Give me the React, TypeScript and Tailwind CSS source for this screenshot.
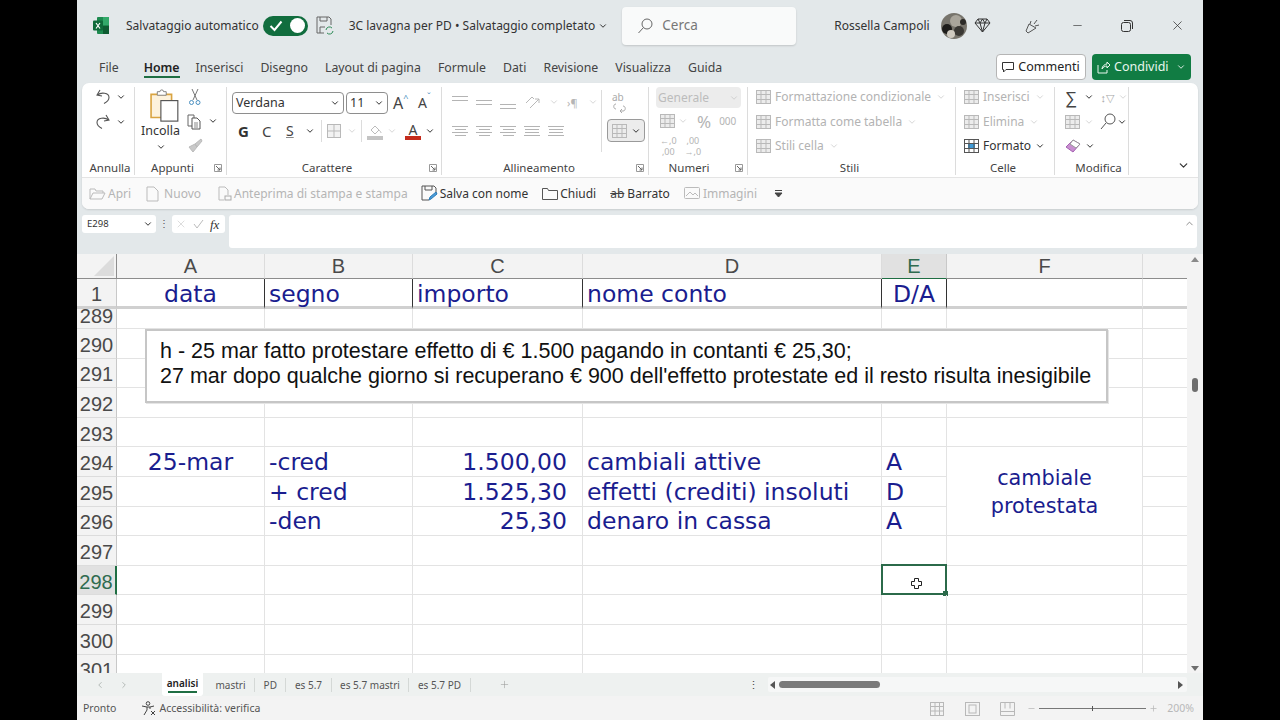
import type { ReactNode } from "react";
import { ChevronDown, ChevronLeft, ChevronRight, ChevronUp, Minus, Plus, X } from "lucide-react";

const tabs = ["Inserisci", "Disegno", "Layout di pagina", "Formule", "Dati", "Revisione", "Visualizza", "Guida"];
const sheets = ["mastri", "PD", "es 5.7", "es 5.7 mastri", "es 5.7 PD"];
const columns = ["A", "B", "C", "D", "E", "F"];

const records: Record<number, string[]> = {
  294: ["25-mar", "-cred", "1.500,00", "cambiali attive", "A"],
  295: ["", "+ cred", "1.525,30", "effetti (crediti) insoluti", "D"],
  296: ["", "-den", "25,30", "denaro in cassa", "A"],
};
const rowNumbers = [289, 290, 291, 292, 293, 294, 295, 296, 297, 298, 299, 300, 301];

function Chev({ off, className = "" }: { off?: boolean; className?: string }) {
  return (
    <ChevronDown
      size={10}
      strokeWidth={off ? 1.5 : 2.4}
      className={`shrink-0 ${off ? "text-[#bdbdbd]" : "text-[#333]"} ${className}`}
    />
  );
}

function Icon({ w = 16, h = 16, children, className = "" }: { w?: number; h?: number; children: ReactNode; className?: string }) {
  return (
    <svg width={w} height={h} viewBox={`0 0 ${w} ${h}`} fill="none" className={`shrink-0 ${className}`}>
      {children}
    </svg>
  );
}

function Launcher() {
  return (
    <Icon w={8} h={8}>
      <path d="M.5 7.5V.5h7v7z" stroke="#999" />
      <path d="M2 2l4 4M6 3.5V6H3.5" stroke="#666" />
    </Icon>
  );
}

function Lines({ widths, gap = 3, color = "#b4b4b4" }: { widths: number[]; gap?: number; color?: string }) {
  return (
    <span className="flex w-[16px] flex-col items-center" style={{ gap }}>
      {widths.map((w, i) => (
        <span key={i} className="h-px" style={{ width: w, background: color }} />
      ))}
    </span>
  );
}

function Group({
  width,
  label,
  launcher,
  labelClass = "",
  children,
}: {
  width: string;
  label: string;
  launcher?: boolean;
  labelClass?: string;
  children: ReactNode;
}) {
  return (
    <div className={`${width} flex h-[88px] shrink-0 flex-col border-r border-[#dcdcdc]`}>
      <div className="h-[72px] min-h-0">{children}</div>
      <div className="flex h-[16px] items-center justify-center pt-[2px]">
        <span className={`flex-1 text-center text-[11.5px] leading-none text-[#444] ${labelClass}`}>{label}</span>
        {launcher && (
          <span className="mr-[4px] flex">
            <Launcher />
          </span>
        )}
      </div>
    </div>
  );
}

function GridIcon({ accent, off }: { accent?: boolean; off?: boolean }) {
  const c = off ? "#b9b9b9" : "#555";
  return (
    <Icon w={15} h={16}>
      <rect x=".5" y="1.5" width="14" height="13" stroke={c} fill={off ? "#ececec" : "#fff"} />
      {accent && <rect x="4" y="6" width="7" height="5" fill="#3f9bd8" />}
      <path d="M.5 5.5h14M.5 10.5h14M5 1.5v13M10 1.5v13" stroke={c} />
    </Icon>
  );
}

function StyleRow({ text }: { text: string }) {
  return (
    <div className="flex h-[24.5px] items-center gap-[4px] pl-[8px]">
      <GridIcon off />
      <span className="text-[12px] leading-none text-[#b3b3b3]">{text}</span>
      <Chev off className="ml-[1px]" />
    </div>
  );
}

function Ribbon() {
  return (
    <div className="mx-[5px] h-[126px] rounded-[7px] bg-white shadow-[0_1px_2px_rgba(0,0,0,0.12)]">
      <div className="flex h-[95px] items-start border-b border-[#e4e4e4] pt-[4px]">
        {/* annulla */}
        <Group width="w-[53px]" label="Annulla" labelClass="pl-[4px]">
          <div className="-mt-[3px] flex h-[25px] items-center gap-[5px] pl-[13px]">
            <Icon w={16} h={16}>
              <path d="M5 1L2 6l5 1M2.5 6C6 3 14 3.500 14 8.500c0 3-3 5-5 6" stroke="#555" strokeWidth="1.1" />
            </Icon>
            <Chev />
          </div>
          <div className="flex h-[25px] items-center gap-[5px] pl-[13px]">
            <Icon w={16} h={16}>
              <path d="M11 1l3 5-5 1M13.500 6C10 3 2 3.500 2 8.500c0 3 3 5 5 6" stroke="#555" strokeWidth="1.1" />
            </Icon>
            <Chev />
          </div>
        </Group>

        {/* appunti */}
        <Group width="w-[92px]" label="Appunti" launcher labelClass="pr-[4px]">
          <div className="flex">
            <div className="flex w-[51px] flex-col items-center">
              <svg width="30" height="33" viewBox="0 0 33 37" fill="none" className="ml-[6px] mt-[2px]">
                <path d="M2 6h23v26H2z" fill="#fdf2dc" stroke="#d9a441" strokeWidth="1.8" />
                <path d="M9 6V3h3a2 2 0 0 1 4 0h3v4H9z" fill="#fff" stroke="#777" />
                <rect x="13" y="13" width="19" height="23" fill="#fff" stroke="#555" strokeWidth="1.3" />
              </svg>
              <span className="text-[12.5px] leading-[18px] text-[#333]">Incolla</span>
              <Chev className="mt-[2px]" />
            </div>
            <div className="-mt-[2px] flex flex-col">
              <div className="flex h-[24px] items-center pl-[1px]">
                <Icon w={16} h={18}>
                  <path d="M5 1l5 11M11 1L6 12" stroke="#777" />
                  <circle cx="4.5" cy="14.5" r="2" stroke="#4a8fc0" />
                  <circle cx="11" cy="14.5" r="2" stroke="#4a8fc0" />
                </Icon>
              </div>
              <div className="flex h-[24px] items-center gap-[6px] pl-[1px]">
                <Icon w={15} h={17}>
                  <path d="M1 2h6v11H1z" stroke="#666" fill="#fff" />
                  <path d="M5 5h5l3 3v8H5z" stroke="#555" fill="#fff" />
                  <path d="M7 10h4M7 12h4M7 14h4" stroke="#888" />
                </Icon>
                <Chev />
              </div>
              <div className="flex h-[24px] items-center pl-[1px]">
                <Icon w={16} h={15}>
                  <path d="M14 1L8 6l2 3 5-6zM8 6L2 9l4 5 4-5z" fill="#c9c9c9" stroke="#bbb" />
                </Icon>
              </div>
            </div>
          </div>
        </Group>

        {/* carattere */}
        <Group width="w-[215px]" label="Carattere" launcher labelClass="pr-[2px]">
          <div className="flex items-center pl-[5px] pt-[5px]">
            <div className="flex h-[22px] w-[112px] items-center justify-between rounded-[4px] border border-[#8e8e8e] px-[3px]">
              <span className="text-[12.5px] leading-none text-[#333]">Verdana</span>
              <Chev />
            </div>
            <div className="ml-[2px] flex h-[22px] w-[42px] items-center justify-between rounded-[4px] border border-[#8e8e8e] px-[3px]">
              <span className="text-[12.5px] leading-none text-[#333]">11</span>
              <Chev />
            </div>
            <span className="ml-[5px] flex w-[25px] text-[16px] leading-none text-[#444]">
              A<sup className="mt-[2px] text-[9px] leading-none text-[#4a8fc0]">^</sup>
            </span>
            <span className="flex w-[20px] text-[14px] leading-none text-[#444]">
              A<sup className="text-[9px] leading-none text-[#4a8fc0]">ˇ</sup>
            </span>
          </div>
          <div className="mt-[5px] flex h-[24px] items-center pl-[11px]">
            <span className="w-[24px] text-[15px] font-bold leading-none text-[#333]">G</span>
            <span className="w-[24px] text-[15px] leading-none text-[#444]">C</span>
            <span className="w-[16px] text-[14px] leading-none text-[#444] underline decoration-[#888]">S</span>
            <Chev className="ml-[3px]" />
            <span className="ml-[6px] h-[22px] w-px bg-[#dcdcdc]" />
            <span className="ml-[4px] flex w-[19px]">
              <Icon w={16} h={16}>
                <rect x="1.500" y="1.500" width="13" height="13" stroke="#b9b9b9" fill="#f2f2f2" />
                <path d="M8 1.500v13M1.500 8h13" stroke="#b9b9b9" />
              </Icon>
            </span>
            <Chev off className="ml-[2px]" />
            <span className="ml-[4px] h-[22px] w-px bg-[#dcdcdc]" />
            <span className="ml-[5px] flex h-[18px] w-[16px] flex-col items-center justify-end">
              <Icon w={14} h={11}>
                <path d="M3 6l4-4 4 4-4 4z" stroke="#bbb" />
                <path d="M11 6c1 1 2 2 2 3" stroke="#bbb" />
              </Icon>
              <span className="mt-[1px] h-[4px] w-[16px] bg-[#c4c4c4]" />
            </span>
            <Chev off className="ml-[4px]" />
            <span className="ml-[7px] flex w-[18px] flex-col items-center">
              <span className="text-[14px] leading-[13px] text-[#444]">A</span>
              <span className="h-[4px] w-[16px] bg-[#c42b1c]" />
            </span>
            <Chev className="ml-[3px]" />
          </div>
        </Group>

        {/* allineamento */}
        <Group width="w-[207px]" label="Allineamento" launcher>
          <div className="flex h-full">
            <div className="w-[159px] pl-[10px]">
              <div className="flex h-[30px] items-center gap-[8px]">
                <span className="mb-[8px] flex">
                  <Lines widths={[16, 16]} />
                </span>
                <Lines widths={[16, 16]} />
                <span className="mt-[8px] flex">
                  <Lines widths={[16, 16]} />
                </span>
                <Icon w={17} h={16}>
                  <path d="M2 9l6-6 2 2M6 14l9-9M15 5v4M15 5h-4" stroke="#b8b8b8" />
                </Icon>
                <Chev off />
                <span className="text-[11px] leading-none text-[#b5b5b5]">›¶</span>
                <Chev off className="ml-[2px]" />
              </div>
              <div className="mt-[2px] flex h-[24px] items-center gap-[8px]">
                <Lines widths={[16, 11, 16, 11]} gap={2} />
                <Lines widths={[16, 11, 16, 11]} gap={2} />
                <Lines widths={[16, 11, 16, 11]} gap={2} />
                <Lines widths={[16, 14, 14, 16]} gap={2} />
                <Lines widths={[16, 14, 14, 16]} gap={2} />
              </div>
            </div>
            <div className="mt-[3px] flex h-[62px] flex-col border-l border-[#dcdcdc] pl-[5px]">
              <div className="ml-[5px] mt-[2px] flex h-[22px] flex-col items-start">
                <span className="text-[10px] leading-[11px] text-[#aaa]">ab</span>
                <Icon w={14} h={10}>
                  <path d="M4 1C1 1 1 6 4 6M8 8h3c3 0 3-5 0-5M8 8l2-2M8 8l2 2" stroke="#aaa" />
                </Icon>
              </div>
              <div className="mt-[5px] flex h-[23px] w-[38px] items-center justify-center gap-[4px] rounded-[4px] border border-[#9a9a9a] bg-[#ececec]">
                <GridIcon off />
                <Chev />
              </div>
            </div>
          </div>
        </Group>

        {/* numeri */}
        <Group width="w-[99px]" label="Numeri" launcher labelClass="pr-[6px]">
          <div className="pl-[7px]">
            <div className="flex h-[21px] w-[85px] items-center justify-between rounded-[4px] bg-[#ececec] px-[2px]">
              <span className="text-[12px] leading-none text-[#bcbcbc]">Generale</span>
              <Chev off />
            </div>
            <div className="mt-[1px] flex h-[24px] items-center text-[#b4b4b4]">
              <span className="ml-[4px] flex">
                <GridIcon off />
              </span>
              <Chev off className="ml-[3px]" />
              <span className="ml-[9px] text-[17px] leading-none">%</span>
              <span className="ml-[8px] text-[10px] leading-none">000</span>
            </div>
            <div className="mt-[2px] flex h-[22px] items-center gap-[8px] pl-[4px] text-center text-[9px] leading-[11px] text-[#b4b4b4]">
              <span>
                ←,0
                <br />
                ,00
              </span>
              <span>
                ,00
                <br />
                →,0
              </span>
            </div>
          </div>
        </Group>

        {/* stili */}
        <Group width="w-[208px]" label="Stili" labelClass="pr-[4px]">
          <div className="-mt-[2px]">
            <StyleRow text="Formattazione condizionale" />
            <StyleRow text="Formatta come tabella" />
            <StyleRow text="Stili cella" />
          </div>
        </Group>

        {/* celle */}
        <Group width="w-[99px]" label="Celle" labelClass="pr-[4px]">
          <div className="-mt-[2px]">
            <StyleRow text="Inserisci" />
            <StyleRow text="Elimina" />
            <div className="flex h-[24.5px] items-center gap-[4px] pl-[8px]">
              <GridIcon accent />
              <span className="text-[12px] leading-none text-[#333]">Formato</span>
              <Chev />
            </div>
          </div>
        </Group>

        {/* modifica */}
        <Group width="w-[74px]" label="Modifica" labelClass="pl-[14px]">
          <div className="-mt-[2px]">
            <div className="flex h-[24.5px] items-center pl-[10px]">
              <span className="w-[17px] text-[17px] leading-none text-[#444]">∑</span>
              <Chev className="ml-[2px]" />
              <span className="ml-[7px] w-[18px] text-[11px] leading-none text-[#a8a8a8]">↕▽</span>
              <Chev off />
            </div>
            <div className="flex h-[24.5px] items-center pl-[10px]">
              <span className="flex w-[17px]">
                <GridIcon off />
              </span>
              <Chev off className="ml-[2px]" />
              <span className="ml-[6px] flex">
                <Icon w={16} h={17}>
                  <circle cx="10" cy="6" r="5" stroke="#555" />
                  <path d="M6 10l-5 6" stroke="#555" />
                </Icon>
              </span>
              <Chev className="ml-[1px]" />
            </div>
            <div className="flex h-[24.5px] items-center gap-[4px] pl-[10px]">
              <Icon w={16} h={14}>
                <path d="M1 8l7-7 7 4-7 8z" fill="#c88fd0" stroke="#a661b3" />
                <path d="M8 1l7 4-4 4-6-4z" fill="#fff" stroke="#999" />
              </Icon>
              <Chev />
            </div>
          </div>
        </Group>

        <div className="flex h-[88px] flex-1 items-end justify-end pb-[3px] pr-[8px]">
          <ChevronDown size={13} strokeWidth={2.2} className="text-[#333]" />
        </div>
      </div>

      {/* barra di accesso rapido */}
      <div className="flex h-[31px] items-center rounded-b-[7px] bg-[#fafafa] pl-[7px] text-[12px] text-[#b5b5b5]">
        <Icon w={17} h={14}>
          <path d="M1 2h5l1 2h7v2M1 2v10h12l3-6H4L1 12" stroke="#bbb" />
        </Icon>
        <span className="ml-[2px] leading-none">Apri</span>
        <Icon w={13} h={16} className="ml-[15px]">
          <path d="M1 1h7l4 4v10H1z" stroke="#bbb" />
        </Icon>
        <span className="ml-[5px] leading-none">Nuovo</span>
        <Icon w={15} h={16} className="ml-[16px]">
          <path d="M2 1h6l3 3v5M2 1v13h5" stroke="#bbb" />
          <rect x="8" y="10" width="6" height="4" stroke="#aaa" />
        </Icon>
        <span className="ml-[2px] leading-none">Anteprima di stampa e stampa</span>
        <Icon w={17} h={17} className="ml-[13px]">
          <path d="M1 1h12l2 2v6M1 1v14h7M4 1v4h7V1" stroke="#555" />
          <path d="M8 15l1-3 6-5 1 2-6 5z" fill="#4a9bd8" stroke="#2b7cb8" />
        </Icon>
        <span className="ml-[2px] leading-none text-[#333]">Salva con nome</span>
        <Icon w={16} h={13} className="ml-[14px]">
          <path d="M.5 12.5v-11h5l1 2h9v9z" stroke="#555" />
        </Icon>
        <span className="ml-[2px] leading-none text-[#333]">Chiudi</span>
        <span className="ml-[14px] text-[12px] leading-none text-[#444] line-through">ab</span>
        <span className="ml-[3px] leading-none text-[#333]">Barrato</span>
        <Icon w={17} h={15} className="ml-[14px]">
          <rect x=".5" y="1.5" width="15" height="11" rx="1" stroke="#bbb" />
          <path d="M2 10l4-4 3 3 2-2 3 3" stroke="#bbb" />
        </Icon>
        <span className="ml-[2px] leading-none">Immagini</span>
        <Icon w={9} h={9} className="ml-[17px]">
          <path d="M1 1.5h7M1 4l3.5 4L8 4z" stroke="#444" fill="#444" />
        </Icon>
      </div>
    </div>
  );
}

function FormulaBar() {
  return (
    <div className="mt-[6px] flex h-[33px] items-start pl-[5px] pr-[6px]">
      <div className="flex h-[18px] w-[74px] items-center justify-between rounded-[3px] bg-white pl-[5px] pr-[3px]">
        <span className="text-[9.5px] leading-none text-[#333]">E298</span>
        <Chev />
      </div>
      <span className="w-[16px] text-center text-[10px] leading-[16px] text-[#555]">⋮</span>
      <div className="flex h-[18px] w-[53px] items-center gap-[6px] rounded-[3px] bg-white pl-[3px]">
        <X size={12} strokeWidth={1} className="text-[#bbb]" />
        <svg width="11" height="10" viewBox="0 0 11 10" fill="none">
          <path d="M1 5l3 4 6-8" stroke="#bbb" />
        </svg>
        <span className="font-['Liberation_Serif'] text-[13px] italic leading-none text-[#333]">fx</span>
      </div>
      <div className="ml-[4px] flex h-[33px] flex-1 justify-end rounded-[3px] bg-white pr-[2px] pt-[3px]">
        <ChevronUp size={11} strokeWidth={1.6} className="text-[#666]" />
      </div>
    </div>
  );
}

function Sheet() {
  const fontData = "font-['DejaVu_Sans'] text-[23.5px] leading-none text-[#1a1d8f]";
  const fontHead = "font-['Liberation_Sans'] text-[20px] leading-none";
  const line = "border-b border-r border-[#e3e3e3]";
  const frozen = "flex items-center pt-[4px] border-b-[3px] border-r border-b-[#d0d0d0] border-r-[#333]";
  const cellAlign = ["justify-center", "justify-start pl-[4px]", "justify-end pr-[15px]", "justify-start pl-[4px]", "justify-start pl-[4px]"];

  return (
    <div className="relative mt-[6px] flex h-[419px] bg-white">
      <div className="relative min-w-0 flex-1 overflow-hidden">
        <div className="grid grid-cols-[40px_148px_148px_170px_299px_65px_196px_45px] grid-rows-[25px_30px_20px_repeat(12,29.6px)]">
          {/* intestazioni */}
          <div className="relative overflow-hidden border-b border-r border-[#8c8c8c] bg-[#f3f3f3]">
            <span className="absolute bottom-[2px] right-[2px] h-0 w-0 border-b-[20px] border-l-[20px] border-b-[#dcdcdc] border-l-transparent" />
          </div>
          {columns.map((c) => (
            <div
              key={c}
              className={`flex items-center justify-center border-b border-r ${fontHead} ${
                c === "E"
                  ? "border-b-[#1f6e43] border-r-[#c8c8c8] bg-[#e1e1e1] text-[#2f6b4f]"
                  : "border-b-[#8c8c8c] border-r-[#dcdcdc] bg-[#f3f3f3] text-[#4a4a4a]"
              }`}
            >
              {c}
            </div>
          ))}
          <div className="border-b border-[#8c8c8c] bg-[#f3f3f3]" />

          {/* riga 1 bloccata */}
          <div className={`flex items-center justify-center border-b-[3px] border-r border-b-[#d0d0d0] border-r-[#c8c8c8] bg-[#f3f3f3] pt-[3px] text-[#4a4a4a] ${fontHead}`}>1</div>
          <div className={`${frozen} justify-center ${fontData}`}>data</div>
          <div className={`${frozen} pl-[4px] ${fontData}`}>segno</div>
          <div className={`${frozen} pl-[4px] ${fontData}`}>importo</div>
          <div className={`${frozen} pl-[4px] ${fontData}`}>nome conto</div>
          <div className={`${frozen} justify-center ${fontData}`}>D/A</div>
          <div className="border-b-[3px] border-r border-b-[#d0d0d0] border-r-[#e3e3e3]" />
          <div className="border-b-[3px] border-b-[#d0d0d0]" />

          {/* righe */}
          {rowNumbers.map((n) => {
            const data = records[n];
            const selected = n === 298;
            return [
              <div
                key={`l${n}`}
                className={`flex justify-center border-b border-r border-b-[#dcdcdc] ${fontHead} ${n === 289 ? "items-end pb-[2px]" : "items-center pt-[3px]"} ${
                  selected ? "border-r-2 border-r-[#1f6e43] bg-[#e1e1e1] text-[#2f6b4f]" : "border-r-[#c8c8c8] bg-[#f3f3f3] text-[#4a4a4a]"
                }`}
              >
                {n}
              </div>,
              ...[0, 1, 2, 3, 4].map((i) => (
                <div key={`${n}-${i}`} className={`relative flex items-center pt-[2px] ${line} ${cellAlign[i]} ${fontData}`}>
                  {data?.[i]}
                  {selected && i === 4 && (
                    <>
                      <span className="absolute -left-px -top-[2px] h-[31px] w-[66px] border-2 border-[#2b6a4a]" />
                      <span className="absolute -bottom-[2px] -right-[2px] h-[5px] w-[5px] bg-[#2b6a4a]" />
                      <svg width="11" height="11" viewBox="0 0 11 11" className="absolute left-[29px] top-[12px]">
                        <path d="M3.5.5h4v3h3v4h-3v3h-4v-3h-3v-4h3z" fill="#fff" stroke="#222" />
                      </svg>
                    </>
                  )}
                </div>
              )),
              n === 294 ? (
                <div
                  key={`f${n}`}
                  className={`row-span-3 flex items-center justify-center pt-[2px] text-center font-['DejaVu_Sans'] text-[20.8px] leading-[28px] text-[#1a1d8f] ${line}`}
                >
                  cambiale
                  <br />
                  protestata
                </div>
              ) : n === 295 || n === 296 ? null : (
                <div key={`f${n}`} className={line} />
              ),
              <div key={`g${n}`} className="border-b border-[#e3e3e3]" />,
            ];
          })}
        </div>

        {/* casella di testo */}
        <div className="absolute left-[68px] top-[75px] flex h-[74px] w-[963px] flex-col border-2 border-[#c6c6c6] bg-white pl-[13px] pt-[8px] font-['Liberation_Sans'] text-[21.5px] leading-[25px] text-[#111] shadow-[1px_1px_0_#e5e5e5]">
          <span className="whitespace-nowrap">h - 25 mar fatto protestare effetto di € 1.500 pagando in contanti € 25,30;</span>
          <span className="whitespace-nowrap">27 mar dopo qualche giorno si recuperano € 900 dell'effetto protestate ed il resto risulta inesigibile</span>
        </div>
      </div>

      {/* barra verticale */}
      <div className="flex w-[16px] shrink-0 flex-col items-center bg-[#f3f3f3] pb-[2px] pt-[3px]">
        <span className="h-0 w-0 border-x-[4px] border-b-[5px] border-x-transparent border-b-[#8a8a8a]" />
        <span className="mt-[116px] h-[14px] w-[6px] rounded-full bg-[#6e6e6e]" />
        <span className="mt-auto h-0 w-0 border-x-[4px] border-t-[5px] border-x-transparent border-t-[#6e6e6e]" />
      </div>
    </div>
  );
}

function SheetTabs() {
  return (
    <div className="flex h-[23px] items-center bg-[#eef1f0] text-[10px] text-[#555]">
      <div className="flex w-[85px] shrink-0 items-center gap-[14px] pl-[18px] text-[#a8b0ac]">
        <ChevronLeft size={10} />
        <ChevronRight size={10} />
      </div>
      <div className="flex h-[23px] w-[41px] shrink-0 flex-col items-center rounded-b-[3px] bg-white pt-[4px] font-semibold leading-[12px] text-[#222]">
        analisi
        <span className="mt-[2px] h-[2px] w-[29px] bg-[#1f6e43]" />
      </div>
      <span className="w-[4px]" />
      {sheets.map((s) => (
        <span key={s} className="flex h-[14px] shrink-0 items-center whitespace-nowrap border-r border-[#d4d8d6] px-[8.5px] leading-none">
          {s}
        </span>
      ))}
      <Plus size={11} strokeWidth={1.2} className="ml-[28px] shrink-0 text-[#999]" />
      <span className="ml-auto text-[11px] leading-none text-[#444]">⋮</span>
      <div className="ml-[9px] mr-[16px] flex h-[15px] w-[419px] shrink-0 items-center rounded-[2px] bg-[#f6f7f7] px-[2px]">
        <span className="h-0 w-0 border-y-[4px] border-r-[5px] border-y-transparent border-r-[#555]" />
        <span className="ml-[4px] h-[7px] w-[101px] rounded-full bg-[#7a7a7a]" />
        <span className="ml-auto mr-[2px] h-0 w-0 border-y-[4px] border-l-[5px] border-y-transparent border-l-[#555]" />
      </div>
    </div>
  );
}

function StatusBar() {
  return (
    <div className="flex h-[24px] items-center bg-[#f3f3f3] pl-[6px] text-[10.5px] text-[#555]">
      <span className="leading-none">Pronto</span>
      <Icon w={16} h={15} className="ml-[25px]">
        <circle cx="7" cy="2.5" r="1.8" stroke="#444" />
        <path d="M1 5l5 1h3l4-1M6 6v3l-3 5M9 6v2M10 10l4 4M14 10l-4 4" stroke="#444" />
      </Icon>
      <span className="ml-[2px] leading-none">Accessibilità: verifica</span>
      <div className="ml-auto flex items-center pr-[9px] text-[#b8b8b8]">
        <Icon w={15} h={15}>
          <rect x=".5" y="1.5" width="13" height="13" stroke="#b8b8b8" />
          <path d="M.5 5.5h13M.5 10h13M5 1.5v13M9.5 1.5v13" stroke="#b8b8b8" />
        </Icon>
        <Icon w={15} h={15} className="ml-[20px]">
          <rect x=".5" y="1.5" width="14" height="13" stroke="#b8b8b8" />
          <rect x="4" y="4" width="7" height="8" stroke="#b8b8b8" />
        </Icon>
        <Icon w={15} h={15} className="ml-[20px]">
          <path d="M.5 1.5h14v13H.5zM.5 10.5h14M5 1.5v6M10 1.5v6" stroke="#b8b8b8" />
        </Icon>
        <Minus size={9} className="ml-[12px]" />
        <span className="relative ml-[3px] h-px w-[107px] bg-[#777]">
          <span className="absolute left-[53px] top-[-2px] h-[5px] w-px bg-[#555]" />
        </span>
        <Plus size={9} className="ml-[3px]" />
        <span className="ml-[9px] leading-none">200%</span>
      </div>
    </div>
  );
}

export default function App() {
  return (
    <div className="flex h-[720px] w-[1280px] overflow-hidden bg-black font-['Noto_Sans',sans-serif]">
      <div className="ml-[77px] flex h-[720px] w-[1126px] flex-col bg-[#e3e8ea]">
        {/* titolo */}
        <header className="flex h-[51px] shrink-0 items-center text-[12px] text-[#333]">
          <svg width="16" height="17" viewBox="0 0 16 17" className="ml-[16px] shrink-0">
            <rect x="4" y="0" width="12" height="17" rx="1" fill="#1d8a4f" />
            <rect x="10" y="0" width="6" height="8" fill="#33a96a" />
            <rect x="10" y="9" width="6" height="8" fill="#0e5c32" />
            <rect x="0" y="3.5" width="10" height="10" rx="1" fill="#0f6b3a" />
            <path d="M3 6l4 5.5M7 6l-4 5.5" stroke="#fff" strokeWidth="1.2" />
          </svg>
          <span className="ml-[17px] whitespace-nowrap leading-none">Salvataggio automatico</span>
          <div className="ml-[4px] flex h-[20px] w-[45px] shrink-0 items-center rounded-full bg-[#116d3e] pl-[6px] pr-[3px]">
            <svg width="14" height="12" viewBox="0 0 14 12" fill="none">
              <path d="M1.5 6l4 4 7-8.5" stroke="#fff" strokeWidth="2" />
            </svg>
            <span className="ml-auto h-[15px] w-[15px] rounded-full bg-white" />
          </div>
          <Icon w={18} h={19} className="ml-[8px]">
            <path d="M1 1h12l2 2v6M1 1v16h7M4 1v4h7V1M4 17v-6h5" stroke="#666" />
            <path d="M10 14a3.5 3.5 0 0 1 6-2M17 15a3.5 3.5 0 0 1-6 2" stroke="#2e8b57" />
          </Icon>
          <span className="ml-[15px] whitespace-nowrap leading-none">3C lavagna per PD • Salvataggio completato</span>
          <Chev className="ml-[3px]" />
          <div className="ml-[14px] flex h-[38px] w-[174px] shrink-0 items-center rounded-[4px] bg-[#f9fafa] pl-[15px] text-[#777] shadow-[0_1px_2px_rgba(0,0,0,0.15)]">
            <Icon w={16} h={16}>
              <circle cx="10" cy="6" r="5" stroke="#666" />
              <path d="M6.5 9.5L1.5 15" stroke="#666" />
            </Icon>
            <span className="ml-[9px] text-[13.5px] leading-none">Cerca</span>
          </div>
          <span className="ml-[38px] whitespace-nowrap leading-none">Rossella Campoli</span>
          <svg width="26" height="26" viewBox="0 0 26 26" className="ml-[11px] shrink-0">
            <defs>
              <clipPath id="avatar-clip">
                <circle cx="13" cy="13" r="13" />
              </clipPath>
            </defs>
            <g clipPath="url(#avatar-clip)">
              <rect width="26" height="26" fill="#77746c" />
              <circle cx="6" cy="16" r="5" fill="#1d1c1a" />
              <circle cx="15" cy="8" r="6" fill="#a9a59b" />
              <circle cx="18" cy="18" r="5" fill="#3a3834" />
              <circle cx="10" cy="21" r="4" fill="#cfcac0" />
              <circle cx="22" cy="9" r="3" fill="#2c2b28" />
            </g>
          </svg>
          <Icon w={17} h={15} className="ml-[7px]">
            <path d="M4 1h9l3 4-7.5 9L1 5zM1 5h15M6 5l2.500 9L11 5M4 1l2 4 2.500-4 2.500 4 2-4" stroke="#333" />
          </Icon>
          <Icon w={16} h={18} className="ml-[33px]">
            <path d="M5 7l7 4-8 5-2-2zM6 7l1-3M10 7l3-4M11 9l4-1" stroke="#555" />
          </Icon>
          <Minus size={13} strokeWidth={1.2} className="ml-[31px] shrink-0 text-[#333]" />
          <Icon w={12} h={12} className="ml-[37px]">
            <rect x=".5" y="2.5" width="9" height="9" rx="2" stroke="#333" />
            <path d="M3 .5h6a2.500 2.500 0 0 1 2.500 2.500v6" stroke="#333" />
          </Icon>
          <X size={15} strokeWidth={1.2} className="ml-[37px] shrink-0 text-[#333]" />
        </header>

        {/* schede */}
        <nav className="flex h-[32px] shrink-0 items-center pt-[2px] text-[12.3px] leading-none text-[#444]">
          <span className="ml-[22px]">File</span>
          <span className="relative ml-[25px] font-semibold text-[#222]">
            Home
            <span className="absolute -bottom-[4px] left-0 h-[2px] w-full bg-[#1f6e43]" />
          </span>
          <div className="ml-[16px] flex gap-[17px]">
            {tabs.map((t) => (
              <span key={t} className="whitespace-nowrap">
                {t}
              </span>
            ))}
          </div>
          <div className="-mt-[2px] ml-auto mr-[6px] flex h-[26px] w-[90px] items-center justify-center gap-[4px] rounded-[4px] border border-[#b5b5b5] bg-white text-[12.5px] text-[#222]">
            <Icon w={12} h={12}>
              <path d="M.5 1.5h11v7H4l-2.500 2.500V8.500h-1z" stroke="#333" />
            </Icon>
            Commenti
          </div>
          <div className="-mt-[2px] mr-[12px] flex h-[26px] w-[99px] items-center rounded-[4px] bg-[#117c43] pl-[5px] pr-[3px] text-[12.5px] text-[#e8f6ee]">
            <Icon w={14} h={13}>
              <path d="M1 4v8h9V9M5 8c0-3 3-5 5-5V1l3 3-3 3V5c-2 0-4 1-5 3z" stroke="#e8f6ee" />
            </Icon>
            <span className="ml-[3px]">Condividi</span>
            <ChevronDown size={10} className="ml-auto mr-[2px] text-white" />
          </div>
        </nav>

        <Ribbon />
        <FormulaBar />
        <Sheet />
        <SheetTabs />
        <StatusBar />
      </div>
    </div>
  );
}
